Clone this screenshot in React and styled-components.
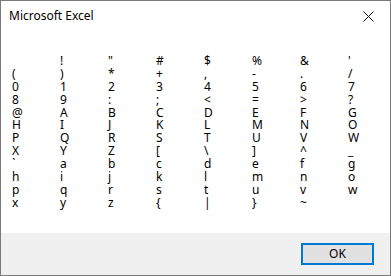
import React from "react";
import styled, { createGlobalStyle } from "styled-components";

const Global = createGlobalStyle`
  html, body { margin: 0; padding: 0; background: #ffffff; }
  * { box-sizing: border-box; }
`;

const Window = styled.div`
  width: 391px;
  height: 276px;
  border: 1px solid #7a7a7a;
  background: #ffffff;
  display: flex;
  flex-direction: column;
  font-family: "Segoe UI", "Noto Sans", "Open Sans", sans-serif;
  color: #000;
`;

const TitleBar = styled.div`
  height: 30px;
  display: flex;
  align-items: flex-start;
  justify-content: space-between;
  padding: 7px 0 0 8px;
`;

const Title = styled.div`
  font-size: 12px;
  line-height: 16px;
`;

const CloseButton = styled.div`
  width: 46px;
  height: 29px;
  margin-top: -7px;
  display: flex;
  align-items: center;
  justify-content: center;
  padding-left: 2px;
  padding-top: 1px;
`;

const Body = styled.div`
  flex: 1;
  padding: 24px 0 0 11px;
`;

const Grid = styled.div`
  display: grid;
  grid-template-columns: repeat(8, 48px);
  font-size: 12px;
  line-height: 12.9px;
`;

const Cell = styled.div`
  white-space: pre;
  height: 12.9px;
`;

const Footer = styled.div`
  height: 42px;
  background: #f0f0f0;
  display: flex;
  justify-content: flex-end;
  align-items: flex-start;
  padding: 10px 16px 0 0;
`;

const Button = styled.button`
  width: 73px;
  height: 22px;
  border: 2px solid #0078d7;
  background: #e1e1e1;
  font-family: "Segoe UI", "Noto Sans", "Open Sans", sans-serif;
  font-size: 12px;
  line-height: 16px;
  color: #000;
  padding: 0;
  display: flex;
  align-items: center;
  justify-content: center;
`;

const chars = [];
for (let c = 32; c < 128; c++) {
  chars.push(c === 127 ? "" : String.fromCharCode(c));
}

export default function App() {
  return (
    <>
      <Global />
      <Window>
        <TitleBar>
          <Title>Microsoft Excel</Title>
          <CloseButton>
            <svg width="11" height="11" viewBox="0 0 11 11">
              <path d="M0.5 0.5 L10.5 10.5 M10.5 0.5 L0.5 10.5" stroke="#111" strokeWidth="1" fill="none" />
            </svg>
          </CloseButton>
        </TitleBar>
        <Body>
          <Grid>
            {chars.map((ch, i) => (
              <Cell key={i}>{ch}</Cell>
            ))}
          </Grid>
        </Body>
        <Footer>
          <Button>OK</Button>
        </Footer>
      </Window>
    </>
  );
}
